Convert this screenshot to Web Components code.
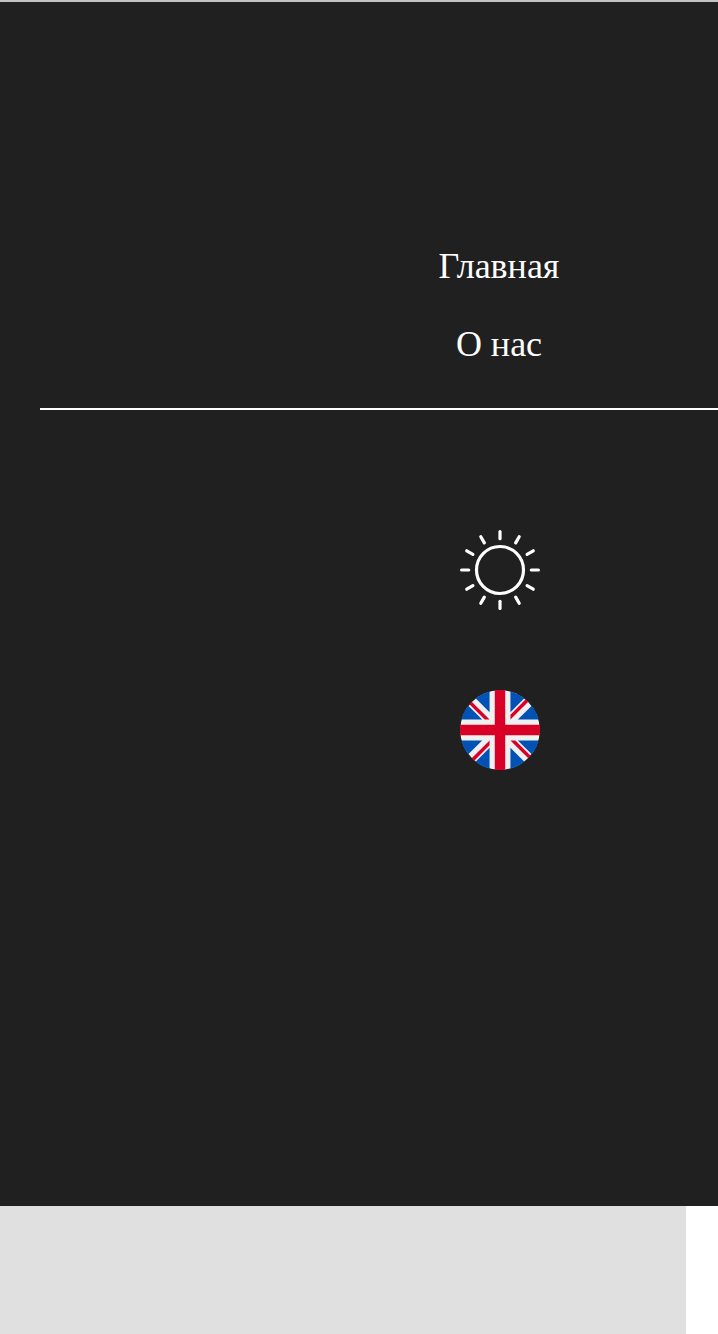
<!DOCTYPE html>
<html lang="ru">
<head>
<meta charset="utf-8">
<title>Меню</title>
<style>
html,body{margin:0;background:#fff;overflow:hidden;height:1334px}
body{font-family:"Liberation Serif",serif}
</style>
</head>
<body>
<app-page>
  <nav-menu>
    <nav-link href="#">Главная</nav-link>
    <nav-link href="#">О нас</nav-link>
    <sun-icon slot="tools"></sun-icon>
    <flag-icon slot="tools"></flag-icon>
  </nav-menu>
</app-page>
<script>
const define = (name, html) => customElements.define(name, class extends HTMLElement {
  constructor() {
    super();
    const t = document.createElement('template');
    t.innerHTML = html;
    this.attachShadow({mode: 'open'}).appendChild(t.content.cloneNode(true));
  }
});

define('app-page', `<style>
:host{display:flex;flex-direction:column;height:1334px;overflow:hidden}
.top{height:2px;flex:none;background:#c3c3c3}
.bottom{flex:1;width:686px;background:#e0e0e0}
</style><div class="top"></div><slot></slot><div class="bottom"></div>`);

define('nav-menu', `<style>
:host{display:block;box-sizing:border-box;width:1000px;height:1204px;flex:none;background:#202020;color:#fff;padding:225px 40px 0}
nav{display:flex;flex-direction:column;align-items:center;border-bottom:2px solid #fff;height:181px;margin-right:2px}
.tools{display:flex;flex-direction:column;align-items:center;gap:80px;padding-top:120px}
</style><nav><slot></slot></nav><div class="tools"><slot name="tools"></slot></div>`);

define('nav-link', `<style>
:host{display:block;height:78px}
a{display:block;font-size:36px;line-height:78px;color:inherit;text-decoration:none;white-space:nowrap}
</style><a href="#"><slot></slot></a>`);

const spokes = Array.from({length: 12}, (_, i) => `<path d="M40 1.6V8.7" transform="rotate(${i * 30} 40 40)"/>`).join('');
define('sun-icon', `<style>:host,svg{display:block;width:80px;height:80px}</style>
<svg viewBox="0 0 80 80" fill="none" stroke="#fff" stroke-width="3.2" stroke-linecap="round"><circle cx="40" cy="40" r="23.5"/>${spokes}</svg>`);

define('flag-icon', `<style>:host,svg{display:block;width:80px;height:80px}</style>
<svg viewBox="0 0 512 512"><circle cx="256" cy="256" r="254.5" fill="#f0f0f0"/>
<g fill="#0052b4"><path d="M52.92 100.142c-20.109 26.163-35.272 56.318-44.101 89.077h133.178zM503.181 189.219c-8.829-32.758-23.993-62.913-44.101-89.076l-89.075 89.076zM8.819 322.784c8.83 32.758 23.993 62.913 44.101 89.075l89.074-89.075zM411.858 52.921c-26.163-20.109-56.317-35.272-89.076-44.102v133.177zM100.142 459.079c26.163 20.109 56.318 35.272 89.076 44.102V370.005zM189.217 8.819c-32.758 8.83-62.913 23.993-89.075 44.101l89.075 89.075zM322.783 503.181c32.758-8.83 62.913-23.993 89.075-44.101l-89.075-89.075zM370.005 322.784l89.075 89.076c20.108-26.162 35.272-56.318 44.101-89.076z"/></g>
<g fill="#d80027"><path d="M509.833 222.609H289.392V2.167C278.461.744 267.317 0 256 0c-11.319 0-22.461.744-33.391 2.167v220.441H2.167C.744 233.539 0 244.683 0 256c0 11.319.744 22.461 2.167 33.391h220.441v220.442C233.539 511.256 244.681 512 256 512c11.317 0 22.461-.743 33.391-2.167V289.392h220.442C511.256 278.461 512 267.319 512 256c0-11.317-.744-22.461-2.167-33.391z"/><path d="M322.783 322.784L437.019 437.02c5.254-5.252 10.266-10.743 15.048-16.435l-97.802-97.802zM189.217 322.784L74.98 437.019c5.252 5.254 10.743 10.266 16.435 15.048l97.802-97.804zM189.217 189.219L74.981 74.98c-5.254 5.252-10.266 10.743-15.048 16.435l97.803 97.803zM322.783 189.219L437.02 74.981c-5.252-5.254-10.743-10.266-16.435-15.047l-97.802 97.803z"/></g></svg>`);
</script>
</body>
</html>
